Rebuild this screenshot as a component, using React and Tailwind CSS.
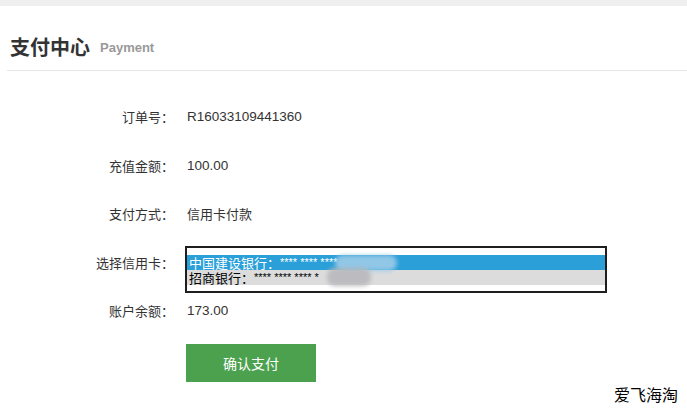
export default function App() {
  const font = { fontFamily: '"Noto Sans CJK SC", "Noto Sans", sans-serif' };
  const latin = { fontFamily: '"Liberation Sans", Arial, sans-serif' };

  return (
    <div className="relative h-[411px] w-[687px] overflow-hidden bg-white text-[#333]" style={font}>
      <div className="h-[6px] w-full bg-[#efefef]" />

      <div className="flex items-end pl-[10px] pt-[28px]">
        <h1 className="text-[20px] font-bold leading-[26px] text-[#333]">支付中心</h1>
        <span className="ml-[10px] pb-[2px] text-[13px] font-bold leading-[20px] text-[#999]" style={latin}>
          Payment
        </span>
      </div>
      <div className="ml-[7px] mt-[10px] h-px bg-[#e6e6e6]" />

      <div className="flex flex-col pt-[36px] text-[13px]">
        <div className="flex h-[20px] items-center">
          <span className="w-[174px] text-right">订单号：</span>
          <span className="ml-[13px] text-[13.5px]" style={latin}>R16033109441360</span>
        </div>
        <div className="mt-[29px] flex h-[20px] items-center">
          <span className="w-[174px] text-right">充值金额：</span>
          <span className="ml-[13px] text-[13.5px]" style={latin}>100.00</span>
        </div>
        <div className="mt-[28px] flex h-[20px] items-center">
          <span className="w-[174px] text-right">支付方式：</span>
          <span className="ml-[13px]">信用卡付款</span>
        </div>
        <div className="mt-[22px] flex items-start">
          <span className="mt-[7px] flex h-[20px] w-[174px] items-center justify-end">选择信用卡：</span>
          <div className="relative ml-[11px] h-[47px] w-[422px] overflow-hidden border-2 border-[#1e1e1e] bg-white pt-[7px]">
            <div className="flex h-[15px] items-center bg-[#2a9fd8] pl-[2px] text-[13px] leading-[13px] text-white">
              <span>中国建设银行：</span>
              <span className="text-[11px] leading-[13px]" style={latin}>**** **** ****</span>
            </div>
            <div className="flex h-[15px] items-center bg-[#dcdcdc] pl-[2px] text-[13px] leading-[13px] text-black">
              <span>招商银行：</span>
              <span className="text-[11px] leading-[13px]" style={latin}>**** **** **** *</span>
            </div>
            <div className="absolute left-[148px] top-[7px] h-[16px] w-[62px] rounded-full bg-[#9ccbe8] opacity-90 blur-[2px]" />
            <div className="absolute left-[140px] top-[20px] h-[18px] w-[44px] rounded-[8px] bg-[#b9b9bd] opacity-90 blur-[2px]" />
          </div>
        </div>
        <div className="mt-[8px] flex h-[20px] items-center">
          <span className="w-[174px] text-right">账户余额：</span>
          <span className="ml-[13px] text-[13.5px]" style={latin}>173.00</span>
        </div>
        <div className="mt-[23px] pl-[186px]">
          <button className="flex h-[38px] w-[130px] items-center justify-center bg-[#4ca14f] text-[14px] text-white">
            确认支付
          </button>
        </div>
      </div>

      <div className="absolute bottom-[8px] right-[9px] text-[16px] leading-[18px] text-black">爱飞海淘</div>
    </div>
  );
}
